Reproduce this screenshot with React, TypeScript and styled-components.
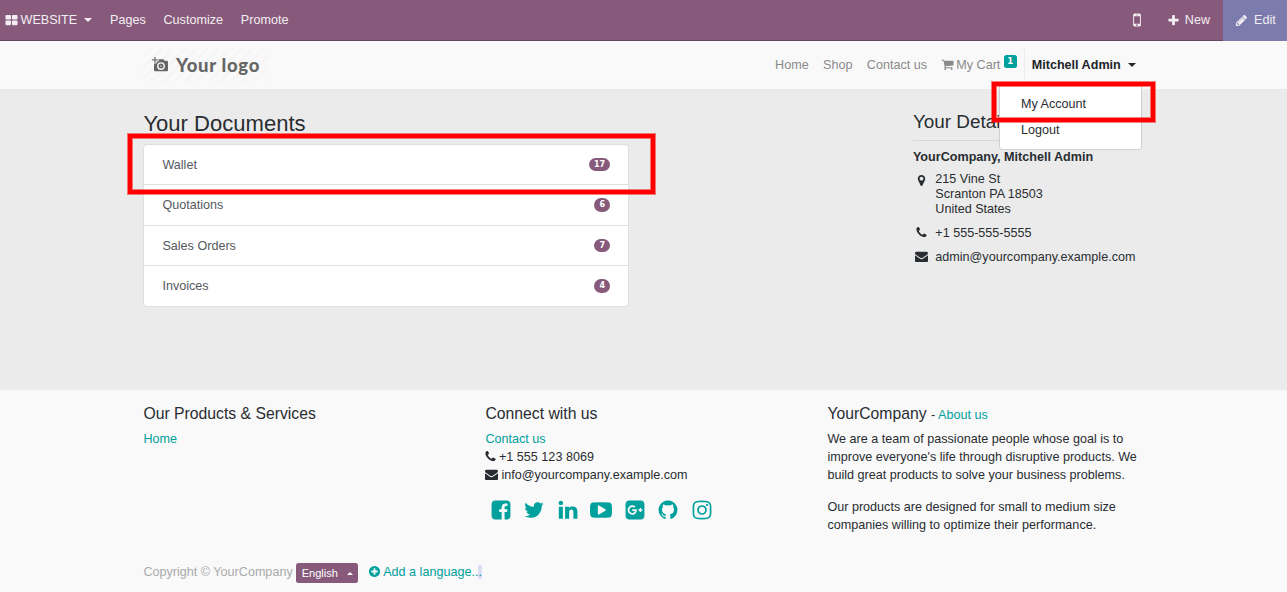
import React from "react";
import styled, { createGlobalStyle, css } from "styled-components";

const GlobalStyle = createGlobalStyle`
  * { box-sizing: border-box; }
  html, body { margin: 0; padding: 0; }
  body {
    font-family: "Liberation Sans", Arial, sans-serif;
    font-size: 12.6px;
    line-height: 18px;
    color: #292d31;
    background: #f9f9f9;
    overflow: hidden;
  }
`;

const PATHS = {
  thLarge:
    "M832 1024v384q0 52-38 90t-90 38h-512q-52 0-90-38t-38-90v-384q0-52 38-90t90-38h512q52 0 90 38t38 90zm0-768v384q0 52-38 90t-90 38h-512q-52 0-90-38t-38-90v-384q0-52 38-90t90-38h512q52 0 90 38t38 90zm896 768v384q0 52-38 90t-90 38h-512q-52 0-90-38t-38-90v-384q0-52 38-90t90-38h512q52 0 90 38t38 90zm0-768v384q0 52-38 90t-90 38h-512q-52 0-90-38t-38-90v-384q0-52 38-90t90-38h512q52 0 90 38t38 90z",
  mobile:
    "M976 1408q0-33-23.500-56.500t-56.500-23.500-56.500 23.500-23.500 56.500 23.500 56.500 56.500 23.500 56.500-23.500 23.500-56.500zm208-160v-704q0-13-9.500-22.500t-22.500-9.500h-512q-13 0-22.500 9.500t-9.500 22.500v704q0 13 9.500 22.500t22.500 9.500h512q13 0 22.500-9.500t9.500-22.500zm-192-848q0-16-16-16h-160q-16 0-16 16t16 16h160q16 0 16-16zm288-16v1024q0 52-38 90t-90 38h-512q-52 0-90-38t-38-90v-1024q0-52 38-90t90-38h512q52 0 90 38t38 90z",
  plus:
    "M1600 736v192q0 40-28 68t-68 28h-416v416q0 40-28 68t-68 28h-192q-40 0-68-28t-28-68v-416h-416q-40 0-68-28t-28-68v-192q0-40 28-68t68-28h416v-416q0-40 28-68t68-28h192q40 0 68 28t28 68v416h416q40 0 68 28t28 68z",
  pencil:
    "M491 1536l91-91-235-235-91 91v107h128v128h107zm523-928q0-22-22-22-10 0-17 7l-542 542q-7 7-7 17 0 22 22 22 10 0 17-7l542-542q7-7 7-17zm-54-192l416 416-832 832h-416v-416zm683 96q0 53-37 90l-166 166-416-416 166-165q36-38 90-38 53 0 91 38l235 234q37 39 37 91z",
  cart:
    "M704 1536q0 52-38 90t-90 38-90-38-38-90 38-90 90-38 90 38 38 90zm896 0q0 52-38 90t-90 38-90-38-38-90 38-90 90-38 90 38 38 90zm128-1088v512q0 24-16.500 42.500t-40.500 21.500l-1044 122q13 60 13 70 0 16-24 64h920q26 0 45 19t19 45-19 45-45 19h-1024q-26 0-45-19t-19-45q0-11 8-31.500t16-36 21.500-40 15.500-29.500l-177-823h-204q-26 0-45-19t-19-45 19-45 45-19h256q16 0 28.500 6.500t19.500 15.500 13 24.500 8 26 5.500 29.500 4.500 26h1201q26 0 45 19t19 45z",
  marker:
    "M1152 640q0-106-75-181t-181-75-181 75-75 181 75 181 181 75 181-75 75-181zm256 0q0 109-33 179l-364 774q-16 33-47.500 52t-67.500 19-67.500-19-46.500-52l-365-774q-33-70-33-179 0-212 150-362t362-150 362 150 150 362z",
  phone:
    "M1600 1240q0 27-10 70.500t-21 68.500q-21 50-122 106-94 51-186 51-27 0-52.500-3.500t-57.500-12.500-47.500-14.500-55.500-20.500-49-18q-98-35-175-83-128-79-264.500-215.500t-215.500-264.500q-48-77-83-175-3-9-18-49t-20.500-55.500-14.500-47.500-12.500-57.500-3.500-52.500q0-92 51-186 56-101 106-122 25-11 68.500-21t70.500-10q14 0 21 3 18 6 53 76 11 19 30 54t35 63.500 31 53.500q3 4 17.500 25t21.500 35.500 7 28.500q0 20-28.500 50t-62 55-62 53-28.500 46q0 9 5 22.500t8.500 20.500 14 24 11.500 19q76 137 174 235t235 174q2 1 19 11.500t24 14 20.500 8.500 22.500 5q18 0 46-28.500t53-62 55-62 50-28.500q14 0 28.500 7t35.500 21.500 25 17.500q25 15 53.500 31t63.500 35 54 30q70 35 76 53 3 7 3 21z",
  envelope:
    "M1792 710v794q0 66-47 113t-113 47h-1472q-66 0-113-47t-47-113v-794q44 49 101 87 362 246 497 345 57 42 92.500 65.500t94.500 48 110 24.500h2q51 0 110-24.500t94.500-48 92.500-65.500q170-123 498-345 57-39 100-87zm0-294q0 79-49 151t-122 123q-376 261-468 325-10 7-42.500 31t-54 38.500-52 32.500-57.500 27-50 9h-2q-23 0-50-9t-57.500-27-52-32.500-54-38.500-42.500-31q-91-64-262-182.500t-205-142.500q-62-42-117-115.500t-55-136.500q0-78 41.500-130t118.500-52h1472q65 0 112.500 47t47.500 113z",
  plusCircle:
    "M1344 960v-128q0-26-19-45t-45-19h-256v-256q0-26-19-45t-45-19h-128q-26 0-45 19t-19 45v256h-256q-26 0-45 19t-19 45v128q0 26 19 45t45 19h256v256q0 26 19 45t45 19h128q26 0 45-19t19-45v-256h256q26 0 45-19t19-45zm320-64q0 209-103 385.500t-279.500 279.500-385.500 103-385.500-103-279.500-279.500-103-385.500 103-385.500 279.500-279.500 385.500-103 385.500 103 279.500 279.500 103 385.500z",
  facebook:
    "M1376 128q119 0 203.500 84.500t84.500 203.500v960q0 119-84.500 203.500t-203.500 84.500h-188v-595h199l30-232h-229v-148q0-56 23.500-84t91.500-28l122-1v-207q-63-9-178-9-136 0-217.500 80t-81.500 226v171h-200v232h200v595h-532q-119 0-203.500-84.500t-84.500-203.500v-960q0-119 84.500-203.500t203.500-84.500h960z",
  twitter:
    "M1684 408q-67 98-162 167 1 14 1 42 0 130-38 259.500t-115.500 248.500-184.500 210.500-258 146-323 54.500q-271 0-496-145 35 4 78 4 225 0 401-138-105-2-188-64.500t-114-159.500q33 5 61 5 43 0 85-11-112-23-185.500-111.500t-73.500-205.500v-4q68 38 146 41-66-44-105-115t-39-154q0-88 44-163 121 149 294.500 238.500t371.500 99.500q-8-38-8-74 0-134 94.500-228.500t228.500-94.500q140 0 236 102 109-21 205-78-37 115-142 178 93-10 186-50z",
  linkedin:
    "M477 625v991h-330v-991h330zm21-306q1 73-50.500 122t-135.500 49h-2q-82 0-132-49t-50-122q0-74 51.500-122.500t134.500-48.500 133 48.500 51 122.500zm1166 729v568h-329v-530q0-105-40.500-164.500t-126.500-59.500q-63 0-105.500 34.500t-63.500 85.500q-11 30-11 81v553h-329q2-399 2-647t-1-296l-1-48h329v144h-2q20-32 41-56t56.500-52 87-43.500 114.500-15.500q171 0 275 113.500t104 332.500z",
  youtube:
    "M1280 896q0-37-30-54l-512-320q-31-20-65-2-33 18-33 56v640q0 38 33 56 16 8 31 8 20 0 34-10l512-320q30-17 30-54zm512 0q0 96-1 150t-8.500 136.500-22.500 147.500q-16 73-69 123t-124 58q-222 25-671 25t-671-25q-71-8-124.500-58t-69.500-123q-14-65-21.500-147.500t-8.500-136.500-1-150 1-150 8.500-136.500 22.500-147.500q16-73 69-123t124-58q222-25 671-25t671 25q71 8 124.500 58t69.500 123q14 65 21.500 147.500t8.500 136.500 1 150z",
  googlePlus:
    "M1045 905q0-26-6-64h-362v132h217q-3 24-16.500 50t-37.500 53-66.500 44.500-96.500 17.500q-99 0-169-71t-70-171 70-171 169-71q92 0 153 59l104-101q-108-100-257-100-160 0-272 112.500t-112 271.500 112 271.500 272 112.500q165 0 266.500-105t101.500-270zm345 46h109v-110h-109v-110h-110v110h-110v110h110v110h110v-110zm274-535v960q0 119-84.500 203.500t-203.500 84.500h-960q-119 0-203.500-84.500t-84.500-203.500v-960q0-119 84.500-203.500t203.500-84.500h960q119 0 203.500 84.500t84.500 203.500z",
  github:
    "M896 128q209 0 385.500 103t279.500 279.500 103 385.500q0 251-146.500 451.500t-378.500 277.500q-27 5-40-7t-13-30q0-3 .5-76.500t.5-134.500q0-97-52-142 57-6 102.500-18t94-39 81-66.500 53-105 20.500-150.500q0-119-79-206 37-91-8-204-28-9-81 11t-92 44l-38 24q-93-26-192-26t-192 26q-16-11-42.500-27t-83.500-38.500-85-13.500q-45 113-8 204-79 87-79 206 0 85 20.500 150t52.500 105 80.500 67 94 39 102.500 18q-39 36-49 103-21 10-45 15t-57 5-65.500-21.500-55.500-62.500q-19-32-48.500-52t-49.500-24l-20-3q-21 0-29 4.500t-5 11.500 9 14 13 12l7 5q22 10 43.500 38t31.500 51l10 23q13 38 44 61.500t67 30 69.500 7 55.500-3.500l23-4q0 38 .5 88.500t.5 54.500q0 18-13 30t-40 7q-232-77-378.500-277.500t-146.500-451.500q0-209 103-385.500t279.500-279.500 385.500-103z",
  instagram:
    "M1152 896q0-106-75-181t-181-75-181 75-75 181 75 181 181 75 181-75 75-181zm138 0q0 164-115 279t-279 115-279-115-115-279 115-279 279-115 279 115 115 279zm108-410q0 38-27 65t-65 27-65-27-27-65 27-65 65-27 65 27 27 65zm-502-220q-7 0-76.500-.5t-105.500 0-96.500 3-103 10-71.500 18.500q-50 20-88 58t-58 88q-11 29-18.500 71.500t-10 103-3 96.500 0 105.500.5 76.500-.5 76.500 0 105.500 3 96.500 10 103 18.500 71.500q20 50 58 88t88 58q29 11 71.500 18.500t103 10 96.500 3 105.500 0 76.500-.5 76.500.5 105.500 0 96.500-3 103-10 71.500-18.500q50-20 88-58t58-88q11-29 18.500-71.500t10-103 3-96.500 0-105.500-.5-76.500.5-76.500 0-105.500-3-96.500-10-103-18.500-71.500q-20-50-58-88t-88-58q-29-11-71.500-18.500t-103-10-96.500-3-105.500 0-76.500.5zm768 630q0 229-5 317-10 208-124 322t-322 124q-88 5-317 5t-317-5q-208-10-322-124t-124-322q-5-88-5-317t5-317q10-208 124-322t322-124q88-5 317-5t317 5q208 10 322 124t124 322q5 88 5 317z",
};

type IconName = keyof typeof PATHS;

const IconSvg = styled.svg<{ $size: number }>`
  width: ${(p) => p.$size}px;
  height: ${(p) => p.$size}px;
  fill: currentColor;
  flex: none;
  display: block;
`;

const Icon = ({ name, size = 13 }: { name: IconName; size?: number }) => (
  <IconSvg $size={size} viewBox="0 0 1792 1792" aria-hidden="true">
    <path d={PATHS[name]} />
  </IconSvg>
);

const Page = styled.div`
  position: relative;
  width: 1287px;
  height: 592px;
  display: flex;
  flex-direction: column;
  overflow: hidden;
`;

const Container = styled.div`
  width: 999px;
  margin-left: 143.4px;
  display: flex;
`;

const TopBar = styled.nav`
  height: 41px;
  flex: none;
  display: flex;
  justify-content: space-between;
  background: #875a7b;
  border-bottom: 1px solid #68465f;
  color: #f3eef2;
`;

const TopGroup = styled.div`
  display: flex;
  align-items: center;
  height: 40px;
`;

const TopItem = styled.a<{ $left?: number; $gap?: number }>`
  display: flex;
  align-items: center;
  gap: ${(p) => p.$gap ?? 2.5}px;
  padding-left: ${(p) => p.$left ?? 17.8}px;
  white-space: nowrap;
`;

const EditButton = styled.a`
  display: flex;
  align-items: center;
  gap: 6px;
  width: 64px;
  height: 41px;
  align-self: flex-start;
  margin-left: 13px;
  padding: 0 0 1px 12px;
  background: #7c7bad;
`;

const Caret = styled.span<{ $up?: boolean; $left?: number; $size?: number }>`
  width: 0;
  height: 0;
  margin-left: ${(p) => p.$left ?? 4.5}px;
  border-left: ${(p) => p.$size ?? 4}px solid transparent;
  border-right: ${(p) => p.$size ?? 4}px solid transparent;
  ${(p) =>
    p.$up
      ? css`border-bottom: ${p.$size ?? 4}px solid currentColor;`
      : css`border-top: ${p.$size ?? 4}px solid currentColor; margin-bottom: 1px;`}
`;

const Header = styled.header`
  height: 48px;
  flex: none;
  background: #f9f9f9;
`;

const HeaderRow = styled(Container)`
  height: 48px;
  justify-content: space-between;
`;

const Logo = styled.div`
  display: flex;
  align-items: center;
  gap: 8px;
  width: 125px;
  height: 33px;
  margin-top: 8px;
  padding: 0 0 2px 8.5px;
  color: #666;
  font-family: Lato, sans-serif;
  font-weight: 900;
  font-size: 18.5px;
  letter-spacing: 0.7px;
  white-space: nowrap;
  background: repeating-linear-gradient(135deg, #f9f9f9 0 3.5px, #f5f5f5 4.500px 6px, #f9f9f9 7px 8px);
`;

const CameraSvg = styled.svg`
  width: 16px;
  height: 16px;
  flex: none;
`;

const Menu = styled.div`
  display: flex;
  align-items: center;
  height: 48px;
  color: #8a8a8a;
`;

const MenuLink = styled.a<{ $left?: number }>`
  display: flex;
  align-items: center;
  gap: 2.2px;
  margin-left: ${(p) => p.$left ?? 14.4}px;
  white-space: nowrap;
  svg {
    margin: -1px 0 0 -0.4px;
  }
`;

const CartCount = styled.sup`
  display: flex;
  align-items: center;
  justify-content: center;
  width: 13px;
  height: 13px;
  margin: 0 0 8px 1.2px;
  border-radius: 2.5px;
  background: #00a09d;
  color: #fff;
  font: bold 8.5px "DejaVu Sans", sans-serif;
`;

const UserMenu = styled.a`
  display: flex;
  align-items: center;
  height: 32px;
  margin-left: 7px;
  padding: 0 6.6px 0 7px;
  border-left: 1px solid #ececec;
  color: #212529;
  font-weight: bold;
  white-space: nowrap;
`;

const Main = styled.main`
  height: 301px;
  flex: none;
  background: #ebebeb;
`;

const MainRow = styled(Container)`
  justify-content: space-between;
`;

const Documents = styled.section`
  width: 486px;
`;

const PageTitle = styled.h3`
  margin: 22px 0 7px;
  font-size: 22.05px;
  font-weight: 400;
  line-height: 26px;
`;

const List = styled.div`
  border: 1px solid #dfdfdf;
  border-radius: 4px;
  background: #fff;
`;

const ListRow = styled.a`
  display: flex;
  align-items: center;
  justify-content: space-between;
  height: 40.5px;
  padding: 0 18px;
  color: #54595e;
  & + & {
    border-top: 1px solid #dfdfdf;
  }
  &:first-child {
    height: 39.4px;
  }
`;

const Pill = styled.span`
  min-width: 16px;
  height: 13.5px;
  padding: 0 5.3px;
  border-radius: 7px;
  background: #875a7b;
  color: #fff;
  font: bold 8px/13.5px "DejaVu Sans", sans-serif;
  text-align: center;
`;

const Details = styled.aside`
  width: 229.5px;
`;

const DetailsTitle = styled.h4`
  margin: 21px 0 7px;
  padding-bottom: 7px;
  border-bottom: 1px solid #d6d6d6;
  font-size: 18.9px;
  font-weight: 400;
  line-height: 23px;
`;

const Owner = styled.div`
  font-weight: bold;
  margin-bottom: 6px;
`;

const DetailLine = styled.div<{ $iconTop?: number }>`
  display: flex;
  gap: 7.6px;
  margin-bottom: 9px;
  padding-left: 1.8px;
  line-height: 15px;
  svg {
    margin-top: ${(p) => p.$iconTop ?? 0.3}px;
  }
`;

const Footer = styled.footer`
  flex: 1;
  background: #f9f9f9;
`;

const FooterRow = styled(Container)`
  height: 171px;
`;

const Column = styled.div`
  width: 342px;
  flex: none;
  &:last-child {
    width: 315px;
  }
`;

const ColumnTitle = styled.h5`
  margin: 14px 0 7px;
  height: 19px;
  font-size: 15.75px;
  font-weight: 400;
  line-height: 19px;
  small {
    font-size: 12.6px;
    line-height: 12px;
  }
`;

const Link = styled.a`
  color: #00a09d;
`;

const ContactLine = styled.div<{ $gap: number; $shift?: number }>`
  display: flex;
  align-items: center;
  gap: ${(p) => p.$gap}px;
  height: 18px;
  svg {
    margin: -1px 0 0 ${(p) => p.$shift ?? 0}px;
  }
`;

const SocialRow = styled.div`
  display: flex;
  gap: 11.5px;
  margin: 15.4px 0 0 4.4px;
  color: #00a09d;
`;

const Paragraph = styled.p`
  margin: 0 0 14px;
  white-space: nowrap;
`;

const CopyrightRow = styled(Container)`
  align-items: center;
  height: 21px;
  color: #a9abac;
`;

const LanguageButton = styled.button`
  display: flex;
  align-items: center;
  width: 62px;
  height: 20px;
  margin: 3px 0 0 3px;
  padding: 0 0 0 6px;
  border: 0;
  border-radius: 2.5px;
  background: #875a7b;
  color: #fff;
  font: 11px "Liberation Sans", Arial, sans-serif;
`;

const AddLanguage = styled(Link)`
  display: flex;
  align-items: center;
  gap: 2.5px;
  margin-left: 10px;
`;

const Selected = styled.span`
  background: #dcdcf2;
`;

const Dropdown = styled.div`
  position: absolute;
  left: 999px;
  top: 84px;
  width: 143px;
  height: 66px;
  padding: 6px 0 0 21px;
  border: 1px solid #cfcfcf;
  border-radius: 3px;
  background: #fff;
`;

const DropdownItem = styled.a`
  display: block;
  height: 26px;
  line-height: 26px;
`;

const Highlight = styled.div<{ $x: number; $y: number; $w: number; $h: number }>`
  position: absolute;
  left: ${(p) => p.$x}px;
  top: ${(p) => p.$y}px;
  width: ${(p) => p.$w}px;
  height: ${(p) => p.$h}px;
  border: 4px solid #f00;
  box-shadow: 0 0 0 1px rgba(255, 0, 0, 0.5), inset 0 0 0 1px rgba(255, 0, 0, 0.5);
`;

const documents = [
  { name: "Wallet", count: 17 },
  { name: "Quotations", count: 6 },
  { name: "Sales Orders", count: 7 },
  { name: "Invoices", count: 4 },
];

const socials: IconName[] = ["facebook", "twitter", "linkedin", "youtube", "googlePlus", "github", "instagram"];

export default function App() {
  return (
    <>
      <GlobalStyle />
      <Page>
        <TopBar>
          <TopGroup>
            <TopItem $left={5}>
              <Icon name="thLarge" />
              WEBSITE
              <Caret />
            </TopItem>
            <TopItem>Pages</TopItem>
            <TopItem>Customize</TopItem>
            <TopItem>Promote</TopItem>
          </TopGroup>
          <TopGroup>
            <TopItem>
              <Icon name="mobile" size={18} />
            </TopItem>
            <TopItem $left={20.6} $gap={5}>
              <Icon name="plus" />
              New
            </TopItem>
            <EditButton>
              <Icon name="pencil" />
              Edit
            </EditButton>
          </TopGroup>
        </TopBar>

        <Header>
          <HeaderRow>
            <Logo>
              <CameraSvg viewBox="0 0 16 16">
                <path
                  d="M2.300 0v2.200H0v1.400h2.300v2.200h1.400V3.600h2.200V2.200H3.700V0z"
                  fill="#777"
                />
                <path
                  fillRule="evenodd"
                  fill="#666"
                  d="M6.600 2.200h4.800l1.200 1.500h2.100c.7 0 1.300.6 1.300 1.300v8c0 .7-.6 1.300-1.300 1.300H3.300C2.600 14.300 2 13.700 2 13V6.500h2.600V4.400h2zM9 5.200a3.900 3.900 0 1 0 0 7.800 3.900 3.900 0 0 0 0-7.800z"
                />
                <circle cx="9" cy="9.100" r="2.500" fill="#666" />
                <circle cx="9" cy="9.100" r="0.900" fill="#bbb" />
              </CameraSvg>
              Your logo
            </Logo>
            <Menu>
              <MenuLink>Home</MenuLink>
              <MenuLink>Shop</MenuLink>
              <MenuLink>Contact us</MenuLink>
              <MenuLink>
                <Icon name="cart" />
                My Cart
                <CartCount>1</CartCount>
              </MenuLink>
              <UserMenu>
                Mitchell Admin
                <Caret $left={7} />
              </UserMenu>
            </Menu>
          </HeaderRow>
        </Header>

        <Main>
          <MainRow>
            <Documents>
              <PageTitle>Your Documents</PageTitle>
              <List>
                {documents.map((d) => (
                  <ListRow key={d.name}>
                    {d.name}
                    <Pill>{d.count}</Pill>
                  </ListRow>
                ))}
              </List>
            </Documents>
            <Details>
              <DetailsTitle>Your Details</DetailsTitle>
              <Owner>YourCompany, Mitchell Admin</Owner>
              <DetailLine $iconTop={2}>
                <Icon name="marker" />
                <div>
                  215 Vine St
                  <br />
                  Scranton PA 18503
                  <br />
                  United States
                </div>
              </DetailLine>
              <DetailLine>
                <Icon name="phone" />
                +1 555-555-5555
              </DetailLine>
              <DetailLine>
                <Icon name="envelope" />
                admin@yourcompany.example.com
              </DetailLine>
            </Details>
          </MainRow>
        </Main>

        <Footer>
          <FooterRow>
            <Column>
              <ColumnTitle>Our Products &amp; Services</ColumnTitle>
              <Link>Home</Link>
            </Column>
            <Column>
              <ColumnTitle>Connect with us</ColumnTitle>
              <Link>Contact us</Link>
              <ContactLine $gap={1.8} $shift={-1.2}>
                <Icon name="phone" />
                +1 555 123 8069
              </ContactLine>
              <ContactLine $gap={3}>
                <Icon name="envelope" />
                info@yourcompany.example.com
              </ContactLine>
              <SocialRow>
                {socials.map((name) => (
                  <Icon key={name} name={name} size={22} />
                ))}
              </SocialRow>
            </Column>
            <Column>
              <ColumnTitle>
                YourCompany <small>- <Link>About us</Link></small>
              </ColumnTitle>
              <Paragraph>
                We are a team of passionate people whose goal is to
                <br />
                improve everyone's life through disruptive products. We
                <br />
                build great products to solve your business problems.
              </Paragraph>
              <Paragraph>
                Our products are designed for small to medium size
                <br />
                companies willing to optimize their performance.
              </Paragraph>
            </Column>
          </FooterRow>
          <CopyrightRow>
            Copyright © YourCompany
            <LanguageButton>
              English
              <Caret $up $left={9} $size={3.5} />
            </LanguageButton>
            <AddLanguage>
              <Icon name="plusCircle" />
              <span>
                Add a language..<Selected>.</Selected>
              </span>
            </AddLanguage>
          </CopyrightRow>
        </Footer>

        <Dropdown>
          <DropdownItem>My Account</DropdownItem>
          <DropdownItem>Logout</DropdownItem>
        </Dropdown>
        <Highlight $x={128} $y={134} $w={527} $h={60} />
        <Highlight $x={992} $y={82} $w={163} $h={40} />
      </Page>
    </>
  );
}
